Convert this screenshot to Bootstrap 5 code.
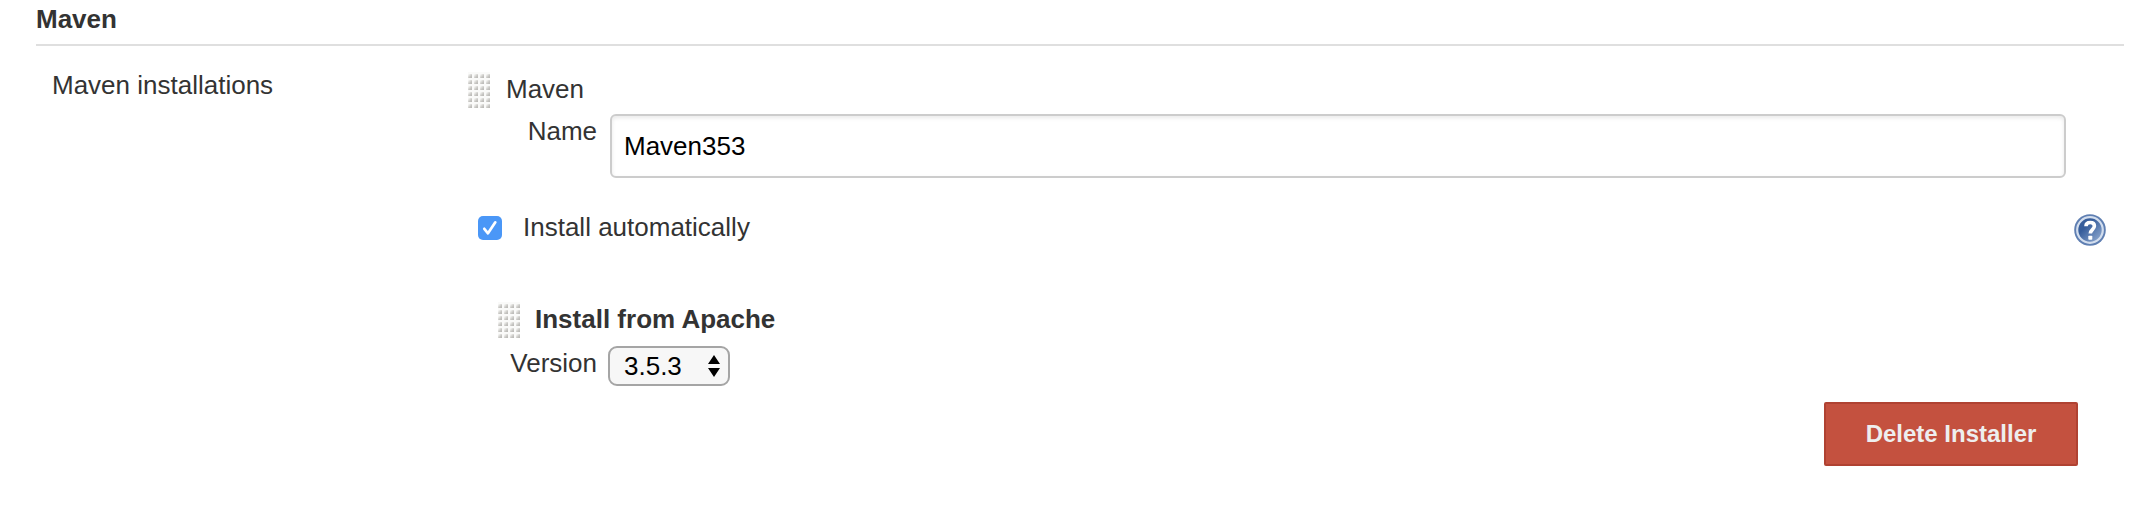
<!DOCTYPE html>
<html lang="en">
<head>
<meta charset="utf-8">
<title>Maven</title>
<link href="https://cdn.jsdelivr.net/npm/bootstrap@5.3.0/dist/css/bootstrap.min.css" rel="stylesheet">
<style>
  body { font: 26px/30px "Liberation Sans", Arial, sans-serif; color: #333; background: #fff; }
  .config { padding: 4px 24px 0 36px; }
  .config-title { font-size: 26px; line-height: 30px; padding-bottom: 10px; border-bottom: 2px solid #dfdfdf; }
  .setting-name { width: 432px; padding: 24px 0 0 16px; }
  .setting-main { padding: 26px 18px 0 0; }
  .grip { width: 22px; height: 36px; display: block; }
  .head-line { height: 42px; }
  .head-line .head-text { padding: 2px 0 0 16px; }
  .field-label { width: 142px; padding: 2px 13px 0 0; }
  .name-input { height: 64px; margin-right: 40px; padding: 0 12px; font-size: 26px; line-height: 30px; color: #000;
    border: 2px solid #ccc; border-radius: 6px; box-shadow: inset 0 2px 4px rgba(0,0,0,.09); }
  .check-line { margin-top: 34px; height: 34px; padding-left: 10px; }
  .check-box { width: 24px; height: 24px; margin: 4px 21px 0 0; }
  .help-icon { margin-top: 2px; }
  .installer { margin-top: 56px; }
  .installer .head-line { height: 44px; padding-left: 30px; }
  .installer .head-text { padding-left: 15px; }
  .installer .field-label { width: 140px; padding-right: 11px; }
  .version-box { width: 122px; height: 40px; padding: 0 8px 0 14px; color: #000; background: #f7f7f7;
    border: 2px solid #a5a5a5; border-radius: 9px; }
  .delete-btn { width: 254px; height: 64px; padding: 0; margin: 16px 28px 0 0; font-size: 24px; line-height: 28px; font-weight: 700;
    color: #eee; background: #c4513f; border: 2px solid #b04232; border-radius: 2px; }
</style>
</head>
<body>
<svg width="0" height="0" class="position-absolute" aria-hidden="true">
  <defs>
    <linearGradient id="dot" x1="0" y1="0" x2="1" y2="1">
      <stop offset=".15" stop-color="#f4f4f2"/><stop offset=".6" stop-color="#c9c8c5"/><stop offset="1" stop-color="#b4b3b0"/>
    </linearGradient>
    <pattern id="dots" width="6" height="6" patternUnits="userSpaceOnUse">
      <rect width="6" height="6" fill="#fafaf9"/>
      <rect y="2" width="4" height="4" rx=".5" fill="url(#dot)"/>
    </pattern>
    <linearGradient id="ball" x1="0" y1="0" x2="1" y2="1">
      <stop offset="0" stop-color="#3a609c"/><stop offset=".35" stop-color="#365d9b"/><stop offset="1" stop-color="#9db5d8"/>
    </linearGradient>
  </defs>
</svg>
<main class="config">
  <h1 class="config-title fw-bold m-0">Maven</h1>
  <div class="d-flex">
    <div class="setting-name flex-shrink-0">Maven installations</div>
    <div class="setting-main flex-grow-1">
      <div class="head-line d-flex">
        <svg class="grip" viewBox="0 0 22 36"><rect width="22" height="36" fill="url(#dots)"/></svg>
        <div class="head-text">Maven</div>
      </div>
      <div class="d-flex">
        <label class="field-label text-end flex-shrink-0" for="toolName">Name</label>
        <input id="toolName" class="form-control name-input" type="text" value="Maven353">
      </div>
      <div class="check-line d-flex">
        <svg class="check-box" viewBox="0 0 24 24"><rect width="24" height="24" rx="5" fill="#4a97f7"/><path d="M6.300 12.800 10 17.300 17.300 6.300" fill="none" stroke="#fff" stroke-width="2.700" stroke-linecap="round" stroke-linejoin="round"/></svg>
        <span>Install automatically</span>
        <svg class="help-icon ms-auto flex-shrink-0" width="32" height="32" viewBox="0 0 32 32">
          <circle cx="16" cy="16" r="15.800" fill="#5f7fb2"/>
          <circle cx="16" cy="16" r="12.800" fill="url(#ball)" stroke="#d3deee" stroke-width="2.200"/>
          <path d="M12 12.200C12 9.600 13.700 8.500 16.200 8.500c2.600 0 4.200 1.300 4.200 3.600 0 3.500-4.100 3.600-4.100 7.500" fill="none" stroke="#fff" stroke-width="3.600"/>
          <rect x="14.300" y="21.800" width="4" height="3.900" rx=".8" fill="#fff"/>
        </svg>
      </div>
      <section class="installer">
        <div class="head-line d-flex">
          <svg class="grip" viewBox="0 0 22 36"><rect width="22" height="36" fill="url(#dots)"/></svg>
          <div class="head-text fw-bold">Install from Apache</div>
        </div>
        <div class="d-flex">
          <div class="field-label text-end">Version</div>
          <div class="version-box d-flex align-items-center justify-content-between" role="combobox">
            <span>3.5.3</span>
            <svg width="12" height="24" viewBox="0 0 12 24"><path d="M0 10 6 1l6 9zM0 14h12l-6 9z"/></svg>
          </div>
        </div>
        <div class="d-flex justify-content-end">
          <button class="btn delete-btn" type="button">Delete Installer</button>
        </div>
      </section>
    </div>
  </div>
</main>
<script src="https://cdn.jsdelivr.net/npm/bootstrap@5.3.0/dist/js/bootstrap.bundle.min.js"></script>
</body>
</html>
